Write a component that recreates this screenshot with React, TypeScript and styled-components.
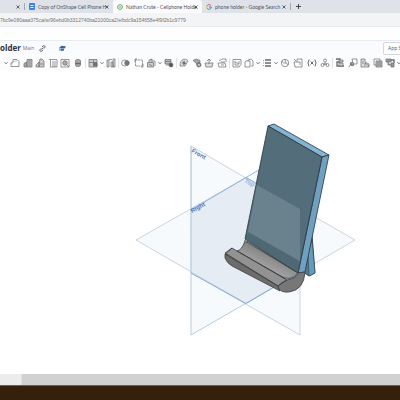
import React from "react";
import styled, { createGlobalStyle } from "styled-components";

const Global = createGlobalStyle`
  * { box-sizing: border-box; }
  body { margin: 0; background: #fff; font-family: "Liberation Sans", Arial, sans-serif; }
  button, input { font: inherit; color: inherit; }
`;

const Page = styled.div`
  display: flex;
  flex-direction: column;
  min-height: 100vh;
  overflow: hidden;
`;

const TabBar = styled.nav`
  display: flex;
  align-items: stretch;
  height: 13px;
  background: #dfe2e9;
`;

const Tab = styled.div<{ $active?: boolean; $width: number }>`
  display: flex;
  align-items: center;
  flex: none;
  gap: 3px;
  width: ${(p) => p.$width}px;
  padding: 0 4px;
  background: ${(p) => (p.$active ? "#fbfbfd" : "transparent")};
  border-radius: 3px 3px 0 0;
`;

const TabTitle = styled.button`
  flex: 1;
  min-width: 0;
  padding: 0;
  border: 0;
  background: none;
  white-space: nowrap;
  text-align: left;
  font-family: Lato, sans-serif;
  font-size: 5px;
  line-height: 8px;
  color: #50545c;
`;

const PlainButton = styled.button`
  display: flex;
  flex: none;
  padding: 0;
  border: 0;
  background: none;
  color: #3f4349;
`;

const TabDivider = styled.span`
  align-self: center;
  flex: none;
  width: 1px;
  height: 7px;
  background: #a4a8b0;
`;

const NewTab = styled(PlainButton)`
  align-self: center;
  margin-left: 5px;
`;

const AddressBar = styled.div`
  display: flex;
  align-items: center;
  height: 14px;
  background: #f3f4f6;
  border-bottom: 1px solid #e9ebee;
`;

const Address = styled.input`
  flex: 1;
  min-width: 0;
  padding: 0;
  border: 0;
  background: none;
  outline: none;
  font-family: "Liberation Sans", Arial, sans-serif;
  font-size: 5px;
  line-height: 10px;
  color: #707479;
`;

const Bookmarks = styled.div`
  height: 13px;
  background: #fefefe;
`;

const TitleBar = styled.header`
  display: flex;
  align-items: center;
  height: 15px;
  border-top: 1px solid #e6ecf2;
  background: #fafbfd;
`;

const DocTitle = styled.h1`
  margin: 0;
  font-family: "Open Sans", sans-serif;
  font-size: 8px;
  line-height: 12px;
  font-weight: 700;
  color: #303338;
`;

const Branch = styled.span`
  margin-left: 2px;
  font-family: "Open Sans", sans-serif;
  font-size: 5px;
  line-height: 12px;
  color: #74777d;
`;

const TitleIcons = styled.div`
  display: flex;
  align-items: center;
  gap: 13px;
  margin-left: 5px;
`;

const AppStore = styled.button`
  margin: 0 -24px 0 auto;
  width: 41px;
  height: 13px;
  padding: 0 0 0 4px;
  flex: none;
  border: 1px solid #d4d7dc;
  border-radius: 2px;
  background: #fff;
  text-align: left;
  white-space: nowrap;
  font-family: "Open Sans", sans-serif;
  font-size: 5px;
  line-height: 8px;
  color: #555960;
`;

const Toolbar = styled.div`
  display: flex;
  align-items: center;
  gap: 2px;
  height: 15px;
  padding-left: 4px;
  background: #fdfdfe;
`;

const ToolRun = styled.div<{ $width: number }>`
  display: flex;
  flex: none;
  justify-content: space-between;
  width: ${(p) => p.$width}px;
`;

const ToolDivider = styled.span`
  flex: none;
  width: 1px;
  height: 10px;
  background: #e0e2e6;
`;

const Canvas = styled.main`
  display: flex;
  flex: 1;
  min-height: 304px;
  background: #fff;
`;

const Model = styled.svg`
  display: block;
  width: 100%;
`;

const PlaneLabel = styled.text`
  font-family: "Liberation Sans", Arial, sans-serif;
  font-size: 6px;
  font-weight: 700;
  fill: #4a74c0;
`;

const ScrollTrack = styled.div`
  display: flex;
  height: 11px;
  background: #d1d1d1;
`;

const ScrollThumb = styled.div`
  width: 22px;
  border-right: 1px solid #dedede;
  background: #ececec;
`;

const Desk = styled.footer`
  height: 15px;
  border-top: 1px solid #6b6251;
  background: #35210b;
`;

type ToolName =
  | "sketch" | "extrude" | "revolve" | "sweep" | "loft" | "thicken" | "fillet"
  | "pattern" | "boolean" | "split" | "transform" | "remove" | "arc" | "delete"
  | "move" | "offset" | "plane" | "frame" | "list" | "helix" | "mate"
  | "variable" | "config" | "sheet" | "bend" | "tab" | "stack" | "tree";

const drawings: Record<ToolName, React.ReactNode> = {
  sketch: <><path d="M1 8.5V5l2-1V1.5h4l2 2v5z" /><path d="M2 6c1-3 3-3 5-3" opacity=".5" /></>,
  extrude: <><path d="M1 5.5 3.5 4v5H1z" fill="#aaa" /><path d="M4 1.5h5V9H4zM5.500 3h2M5.500 5h2M5.500 7h2" fill="#bbb" /></>,
  revolve: <><path d="M1 7 4 4v5H1zM5 1h2l2 2v6H4V6z" fill="#ccc" /><path d="M5 6h3" /></>,
  sweep: <><path d="M1 1.500h8M2.500 2v7H9V2" /><path d="M4 4h4M4 6h4M4 8h4" /></>,
  loft: <><path d="M1 1.500h8V9H1z" /><circle cx="5" cy="5" r="2.300" fill="#aaa" /><path d="m6 6 3 3" /></>,
  thicken: <><path d="M2.500 3c0-2 5-2 5 0v4c0 2-5 2-5 0z" fill="#aaa" /><path d="M2.500 5.500h5" strokeWidth="1.500" /></>,
  fillet: <><path d="M1 1.500h8V9H1z" fill="#ccc" /><path d="M1 4.500h8M5.500 2v7" /><path d="M6 5h3v3H6z" fill="#777" /></>,
  pattern: <><path d="M1 2h2v7H1zM5 4h2v5H5zM7 1h2v8H7z" fill="#ddd" /><path d="M3 1.500h3" /></>,
  boolean: <><ellipse cx="4" cy="5" rx="3.500" ry="3" /><circle cx="6" cy="5" r="2.300" fill="#777" /></>,
  split: <><path d="M1.500 2h7v6h-7z" strokeDasharray="2 .5" /><path d="M1 4V1h2M9 6v3H7" /></>,
  transform: <><path d="M1.500 4.500h6V9h-6zM3 4V2l3-1v3" fill="#ccc" /><path d="M6 3h3v5M3 6l3 2" /></>,
  remove: <><path d="M1 1.500h6V6H1z" fill="#bbb" /><path d="M1 3.500h6M2 7h3" /><circle cx="7" cy="7" r="2" fill="#555" /></>,
  arc: <><path d="M1 8c0-8 6-8 8-5L6 8zM3 5l3-2M4 7l3-2" fill="#ddd" /><circle cx="5" cy="5" r="1" fill="#555" /></>,
  delete: <><path d="M1 2.500 4 1l4 1.500v2L5 6z" fill="#aaa" /><circle cx="6.800" cy="6.800" r="2.200" fill="#777" /><path d="m5.800 5.800 2 2m0-2-2 2" stroke="#fff" /></>,
  move: <><path d="M1 5h8L8 9H2z" fill="#ddd" /><path d="M5 6V1M3 3l2-2 2 2" /></>,
  offset: <><path d="M1 5h7l1 4H2zM2 3l3-2h4v3" /><path d="M4 4h4M4 7h3" /></>,
  plane: <><path d="M1 1.500h8v5L7 9H1z" /><path d="M3 3v4h4M3 4l4 2V3" /></>,
  frame: <><path d="M2 3h4v6H1V4zM4 2l3-1 2 2v5H7" /><path d="M4 2v1" /></>,
  list: <><path d="M3 2h6M3 5h6M3 8h6" strokeWidth="1.400" /><path d="m1 3 1-1M1 5h1M1 8l1-1" /></>,
  helix: <><circle cx="5" cy="5" r="3.700" /><path d="M2 3c1 4 5 0 6 4M5 2l1 3" /></>,
  mate: <><path d="M1 4h3V1h5v8H2z" /><path d="M4 4h3v3M1 1l2 2" /></>,
  variable: <><path d="M2 1.500Q0 5 2 8.500M8 1.500q2 3.500 0 7M3.500 3.500l3 3M6.500 3.500l-3 3" strokeWidth="1" /></>,
  config: <><circle cx="5" cy="2.500" r="1.500" /><circle cx="2.500" cy="7" r="1.500" /><circle cx="7.500" cy="7" r="1.500" /><path d="M5 4v3M3 6h4" /></>,
  sheet: <><path d="M1 1h4v3H2v4h7" strokeWidth="1.300" /><path d="M4 2h4v2H4zM4 5h4v3H4z" fill="#ccc" /></>,
  bend: <><path d="M4 1h5v5H5z" /><circle cx="4" cy="6" r="1.700" fill="#aaa" /><path d="M1 9c1-3 3-3 5-1M2 5l2 1" /></>,
  tab: <><path d="M1 1h4v3l4 2v3H1z" fill="#ddd" /><path d="M5 8V5l4 3M3 3v3" /></>,
  stack: <><path d="M1 1h6v6H1z" /><path d="M3 3h6v6H3z" fill="#bbb" /><path d="M4 5h4M4 7h4" /></>,
  tree: <><path d="M1 1h5v3H1zM6 5h3v4H6zM3 4v3h3" fill="#999" /><path d="M6 2h3v3" strokeWidth="1.300" /></>,
};

const Tool = ({ name }: { name: ToolName }) => (
  <PlainButton type="button" aria-label={name}>
    <svg width="10" height="10" viewBox="0 0 10 10" fill="none" stroke="#666a70" strokeWidth=".7">
      {drawings[name]}
    </svg>
  </PlainButton>
);

const More = ({ label }: { label: string }) => (
  <PlainButton type="button" aria-label={label}>
    <svg width="4" height="4" viewBox="0 0 4 4" fill="none" stroke="#50545a" strokeWidth=".8">
      <path d="m.4 1.200 1.600 1.600 1.600-1.600" />
    </svg>
  </PlainButton>
);

const Run = ({ width, names }: { width: number; names: ToolName[] }) => (
  <ToolRun $width={width}>
    {names.map((name) => <Tool key={name} name={name} />)}
  </ToolRun>
);

const CloseTab = ({ label }: { label: string }) => (
  <PlainButton type="button" aria-label={label}>
    <svg width="4" height="4" viewBox="0 0 4 4" stroke="#3f4349" strokeWidth=".8">
      <path d="m.5.5 3 3m0-3-3 3" />
    </svg>
  </PlainButton>
);

const DocIcon = () => (
  <svg width="6" height="7" viewBox="0 0 6 7">
    <rect width="6" height="7" rx="1" fill="#3f82e4" />
    <path d="M1.500 2.500h3m-3 2h3" stroke="#fff" strokeWidth=".9" />
  </svg>
);

const OnshapeIcon = () => (
  <svg width="6" height="6" viewBox="0 0 6 6" fill="none" stroke="#5eae62">
    <path d="m3 .5 2.200 1.200v2.600L3 5.500.8 4.300V1.700z" />
    <path d="M3 2v2" />
  </svg>
);

const GoogleIcon = () => (
  <svg width="6" height="6" viewBox="0 0 6 6" fill="none" strokeWidth="1">
    <path d="M4.800 1.400A2.300 2.300 0 0 0 1 1.900" stroke="#e34b3f" />
    <path d="M1 1.900a2.300 2.300 0 0 0 0 2.200" stroke="#efb52e" />
    <path d="M1 4.100a2.300 2.300 0 0 0 3.600.6" stroke="#40a35a" />
    <path d="M4.600 4.700c.5-.5.7-1 .7-1.700H3" stroke="#477fe0" />
  </svg>
);

const App = () => (
  <Page>
    <Global />
    <TabBar aria-label="Browser tabs">
      <Tab $width={24}>
        <TabTitle aria-label="Previous tab" />
        <CloseTab label="Close previous tab" />
      </Tab>
      <TabDivider />
      <Tab $width={88}>
        <DocIcon />
        <TabTitle>Copy of OnShape Cell Phone H</TabTitle>
        <CloseTab label="Close document tab" />
      </Tab>
      <Tab $width={89} $active>
        <OnshapeIcon />
        <TabTitle>Nathan Crute - Cellphone Holde</TabTitle>
        <CloseTab label="Close Onshape tab" />
      </Tab>
      <Tab $width={88}>
        <GoogleIcon />
        <TabTitle>phone holder - Google Search</TabTitle>
        <CloseTab label="Close search tab" />
      </Tab>
      <TabDivider />
      <NewTab type="button" aria-label="New tab">
        <svg width="5" height="5" viewBox="0 0 5 5" stroke="#34383e" strokeWidth=".9">
          <path d="M2.500 0v5M0 2.500h5" />
        </svg>
      </NewTab>
    </TabBar>
    <AddressBar>
      <Address aria-label="Address" defaultValue="7bc9e080aaa375ca/w/96ebd0b3312740ba21000ca2/e/bdc9a154658e4f9f2b1c9779" />
    </AddressBar>
    <Bookmarks />
    <TitleBar>
      <DocTitle>older</DocTitle>
      <Branch>Main</Branch>
      <TitleIcons>
        <PlainButton type="button" aria-label="Copy link">
          <svg width="7" height="7" viewBox="0 0 7 7" fill="none" stroke="#50545a" strokeWidth=".9">
            <path d="m3 2 1.200-1.200c1-.8 2.500.6 1.700 1.700L4.700 3.700M4 5 2.800 6.200C1.800 7 .3 5.600 1.100 4.500l1.200-1.200M2.500 4.500l2-2" />
          </svg>
        </PlainButton>
        <PlainButton type="button" aria-label="Learning center">
          <svg width="7" height="7" viewBox="0 0 7 7">
            <path d="M2.500.7 7 1.500 5.700 3.500 0 3z" fill="#2e61ad" />
            <path d="M1.500 3.500 5 3.800v1.500c-1 1-3 .8-3.500 0z" fill="#3569b4" />
            <path d="M.7 3v3" stroke="#3569b4" strokeWidth=".6" />
          </svg>
        </PlainButton>
      </TitleIcons>
      <AppStore type="button">App Store</AppStore>
    </TitleBar>
    <Toolbar role="toolbar" aria-label="Feature tools">
      <More label="Sketch options" />
      <Run width={73} names={["sketch", "extrude", "revolve", "sweep", "loft", "thicken"]} />
      <ToolDivider />
      <Tool name="fillet" />
      <More label="Fillet options" />
      <Tool name="pattern" />
      <ToolDivider />
      <Run width={35} names={["boolean", "split", "transform"]} />
      <More label="Transform options" />
      <Tool name="remove" />
      <ToolDivider />
      <Run width={48} names={["arc", "delete", "move", "offset"]} />
      <ToolDivider />
      <Run width={22} names={["plane", "frame"]} />
      <More label="Frame options" />
      <Tool name="list" />
      <More label="List options" />
      <Run width={50} names={["helix", "mate", "variable", "config"]} />
      <ToolDivider />
      <Run width={60} names={["sheet", "bend", "tab", "stack", "tree"]} />
      <More label="Tree options" />
    </Toolbar>
    <Canvas>
      <Model viewBox="0 70 400 304" role="img" aria-label="Phone stand model with reference planes">
        <defs>
          <linearGradient id="scoop" x1="250" y1="245" x2="238" y2="270" gradientUnits="userSpaceOnUse">
            <stop offset="0" stopColor="#858585" />
            <stop offset=".45" stopColor="#9f9f9f" />
            <stop offset="1" stopColor="#858585" />
          </linearGradient>
        </defs>
        <g fill="#d8ecf2" fillOpacity=".24" stroke="#b9cbdb" strokeWidth=".8">
          <path d="m191 146 109 63.500V335l-109-62z" />
          <path d="m191 210 109-64v126l-109 63z" stroke="none" />
          <path d="m136 240 110-62.500L355 240l-109 63.500z" />
        </g>
        <path d="m191 210 55-32.500 54 32V272l-54 31.500-55-30.500z" fill="#dcdfea" fillOpacity=".35" />
        <path d="M191 335 300 272V146l-24 14M191 335V146" fill="none" stroke="#b4cedf" />
        <path d="m191 210 55-32.500 14 8M191 273l55 30.500 34-20M246 177.500 300 146" fill="none" stroke="#7da2d6" strokeWidth=".8" />
        <PlaneLabel transform="translate(191 152) rotate(29)">Front</PlaneLabel>
        <PlaneLabel transform="translate(192 213) rotate(-29)">Right</PlaneLabel>
        <PlaneLabel transform="translate(244 182) rotate(29)" opacity=".5">Top</PlaneLabel>
        <g stroke="#28343d" strokeWidth=".8" strokeLinejoin="round">
          <path d="m312 235 3 38-6 3-6-4z" fill="#537b94" />
          <path d="m312 239 3 34-6 3-1-22z" fill="#659cba" strokeWidth=".5" />
          <path d="m268 126 6-2 55 31-7 2z" fill="#83b4d2" />
          <path d="m322 157 7-2-24 117-7 1z" fill="#70a0bf" />
          <path d="m268 126 54 31-24 116-53-34z" fill="#536d7a" />
        </g>
        <path d="m257 185 43 24v52l-52-29z" fill="#718793" fillOpacity=".78" />
        <path d="m248 232 52 30-2 10-53-33z" fill="#4a6470" fillOpacity=".55" />
        <g stroke="#3d3d3d" strokeWidth=".8" strokeLinejoin="round">
          <path d="M245 241q-3 9-8 10l41 24q14 8 20-2z" fill="url(#scoop)" />
          <path d="m232 248 5 3 50 29-9 8-53-34z" fill="#929292" />
          <path d="M225 254v4q2 5 7 8l48 25-2-5z" fill="#6c6c6c" />
          <path d="M278 286q4-4 9-6 10-2 11-7l7-1q-1 18-16 20-10 1-11-6z" fill="#777" />
          <path d="m232 248-7 5 53 33 9-6M237 251l42 24 8 5M245 240l53 33" fill="none" />
        </g>
        <circle cx="246" cy="241" r="1.300" fill="#aaa" stroke="#444" strokeWidth=".6" />
        <path d="m280 283 18-10" stroke="#557ba8" strokeWidth=".6" />
      </Model>
    </Canvas>
    <ScrollTrack><ScrollThumb /></ScrollTrack>
    <Desk />
  </Page>
);

export default App;
